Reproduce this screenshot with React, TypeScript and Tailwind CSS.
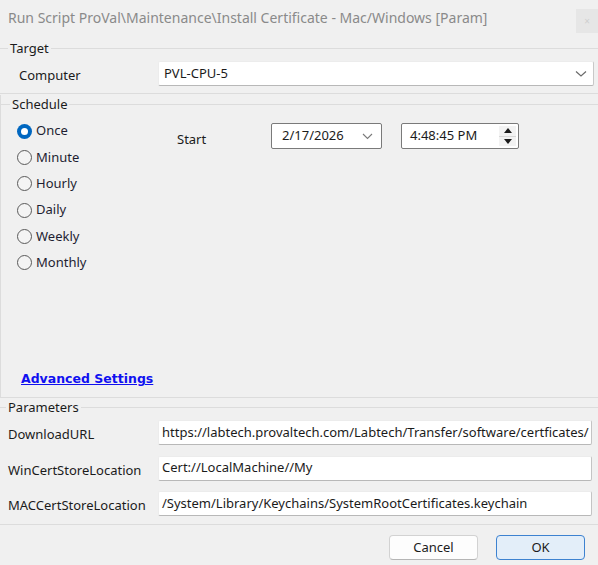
import React from "react";

const font = { fontFamily: '"Noto Sans", "Open Sans", sans-serif' };

function GroupHeader({ label, lead = "w-[8px]" }: { label: string; lead?: string }) {
  return (
    <div className="flex items-center h-[18px]">
      <div className={`${lead} h-px bg-[#dcdcdc]`} />
      <span className="px-[2px] text-[13px] leading-[18px] text-[#1b1b1b]">{label}</span>
      <div className="flex-1 h-px bg-[#dcdcdc]" />
    </div>
  );
}

function Radio({ label, checked }: { label: string; checked?: boolean }) {
  return (
    <div className="flex items-center h-[26.3px] gap-[4px]">
      {checked ? (
        <div className="w-[15px] h-[15px] rounded-full bg-[#0067c0] flex items-center justify-center">
          <div className="w-[7px] h-[7px] rounded-full bg-white" />
        </div>
      ) : (
        <div className="w-[15px] h-[15px] rounded-full border border-[#5a5a5a] bg-[#f4f4f4]" />
      )}
      <span className="text-[13px] text-[#1e1e32]">{label}</span>
    </div>
  );
}

function TextBox({ value }: { value: string }) {
  return (
    <div className="w-[434px] h-[25px] bg-white border border-[#ececec] border-r-[#c4c4c4] border-b-[#b8b8b8] rounded-[2px] flex items-center pl-[3px] text-[13px] text-[#1b1b1b] whitespace-nowrap overflow-hidden">
      {value}
    </div>
  );
}

export default function App() {
  return (
    <div className="w-[598px] h-[565px] bg-[#f0f0f0] overflow-hidden flex flex-col" style={font}>
      {/* Title bar */}
      <div className="h-[39px] flex items-start">
        <div className="pl-[8px] pt-[7px] text-[14px] leading-[22px] text-[#8a8a8a] whitespace-nowrap flex-1">
          Run Script ProVal\Maintenance\Install Certificate - Mac/Windows [Param]
        </div>
        <div className="mt-[9px] w-[22px] h-[24px] bg-[#e6e6e6] flex items-center justify-center text-[10px] text-[#cfcfcf]">
          ×
        </div>
      </div>

      {/* Target */}
      <div className="border-b border-[#dcdcdc] pb-[7px]">
        <GroupHeader label="Target" />
        <div className="flex items-center mt-[4px] h-[25px]">
          <div className="w-[158px] pl-[19px] text-[13px] text-[#1b1b1b] pt-[5px]">Computer</div>
          <div className="w-[436px] h-[25px] bg-white border border-[#ececec] border-r-[#c8c8c8] border-b-[#b8b8b8] rounded-[2px] flex items-center pl-[5px] pr-[6px] text-[13px] text-[#1b1b1b]">
            <span className="flex-1">PVL-CPU-5</span>
            <svg width="12" height="8" viewBox="0 0 12 8" fill="none">
              <path d="M1 1.5 L6 6 L11 1.5" stroke="#6a6a6a" strokeWidth="1.2" />
            </svg>
          </div>
        </div>
      </div>

      {/* Schedule */}
      <div className="mt-[1px] border-b border-l border-[#dcdcdc] h-[303px] flex flex-col">
        <GroupHeader label="Schedule" lead="w-[9px]" />
        <div className="flex mt-[5px]">
          <div className="pl-[16px] w-[176px]">
            <Radio label="Once" checked />
            <Radio label="Minute" />
            <Radio label="Hourly" />
            <Radio label="Daily" />
            <Radio label="Weekly" />
            <Radio label="Monthly" />
          </div>
          <div className="flex items-start pt-[5px]">
            <div className="w-[94px] pt-[7px] text-[13px] text-[#1b1b1b]">Start</div>
            <div className="w-[111px] h-[26px] bg-white border border-[#7a7a7a] rounded-[2px] flex items-center pl-[10px] pr-[8px] text-[13px] text-[#1b1b1b]">
              <span className="flex-1">2/17/2026</span>
              <svg width="11" height="7" viewBox="0 0 11 7" fill="none">
                <path d="M1 1 L5.5 5.5 L10 1" stroke="#7a7a7a" strokeWidth="1.1" />
              </svg>
            </div>
            <div className="ml-[19px] w-[118px] h-[26px] bg-white border border-[#7a7a7a] rounded-[2px] flex items-center pl-[8px] pr-[2px] text-[13px] text-[#1b1b1b]">
              <span className="flex-1">4:48:45 PM</span>
              <div className="flex flex-col w-[17px] h-[20px] bg-[#f3f3f3]">
                <div className="flex-1 flex items-center justify-center border-b border-[#d8d8d8]">
                  <svg width="8" height="5" viewBox="0 0 8 5"><path d="M0 5 L4 0 L8 5 Z" fill="#1b1b1b" /></svg>
                </div>
                <div className="flex-1 flex items-center justify-center">
                  <svg width="8" height="5" viewBox="0 0 8 5"><path d="M0 0 L4 5 L8 0 Z" fill="#1b1b1b" /></svg>
                </div>
              </div>
            </div>
          </div>
        </div>
        <div className="mt-auto pb-[8px] pl-[20px]">
          <span
            className="text-[12.5px] font-bold underline text-[#1010f0]"
            style={{ fontFamily: '"DejaVu Sans", Verdana, sans-serif' }}
          >
            Advanced Settings
          </span>
        </div>
      </div>

      {/* Parameters */}
      <div className="border-b border-[#dcdcdc] pb-[8px]">
        <GroupHeader label="Parameters" lead="w-[6px]" />
        <div className="flex flex-col gap-[10.5px] mt-[4px]">
          {[
            ["DownloadURL", "https://labtech.provaltech.com/Labtech/Transfer/software/certficates/"],
            ["WinCertStoreLocation", "Cert://LocalMachine//My"],
            ["MACCertStoreLocation", "/System/Library/Keychains/SystemRootCertificates.keychain"],
          ].map(([l, v]) => (
            <div key={l} className="flex items-center">
              <div className="w-[158px] pl-[8px] pt-[5px] text-[13px] text-[#1b1b1b]">{l}</div>
              <TextBox value={v} />
            </div>
          ))}
        </div>
      </div>

      {/* Buttons */}
      <div className="flex justify-end gap-[18px] pr-[13px] mt-[10px]">
        <div className="w-[89px] h-[25px] bg-[#fdfdfd] border border-[#d2d2d2] border-b-[#b5b5b5] rounded-[4px] flex items-center justify-center text-[13px] text-[#1b1b1b]">
          Cancel
        </div>
        <div className="w-[89px] h-[25px] bg-[#e3eef9] border-[1.5px] border-[#3d82d0] rounded-[4px] flex items-center justify-center text-[13px] text-[#1b1b1b]">
          OK
        </div>
      </div>
    </div>
  );
}
